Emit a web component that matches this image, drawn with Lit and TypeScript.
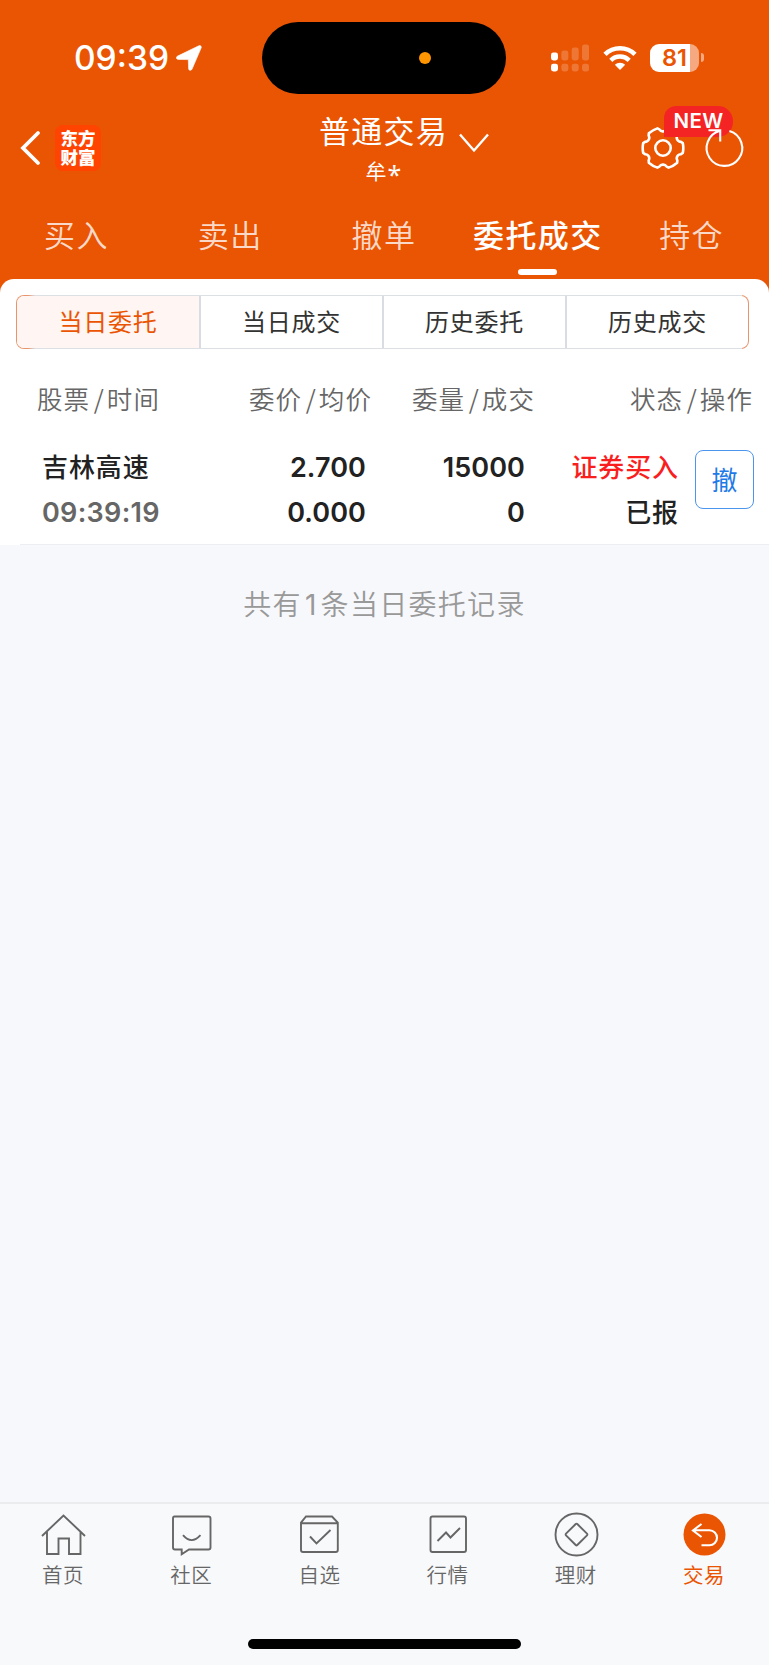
import { LitElement, html, svg, css, type TemplateResult } from "lit";
import { customElement, property, state } from "lit/decorators.js";
import { classMap } from "lit/directives/class-map.js";

const CJK = css`"Noto Sans CJK SC", sans-serif`;

@customElement("status-bar")
class StatusBar extends LitElement {
  static styles = css`
    :host { display: grid; grid-template-columns: 262px 244px 1fr; height: 94px; padding-top: 22px; box-sizing: border-box; color: #fff; font-family: Inter, ${CJK}; }
    .left { display: flex; align-items: center; height: 72px; padding-left: 74px; gap: 8px; }
    .time { font-size: 33.5px; font-weight: 500; line-height: 40px; width: 94px; white-space: nowrap; }
    .island { background: #000; border-radius: 36px; height: 72px; display: flex; align-items: center; justify-content: flex-end; padding-right: 75px; box-sizing: border-box; }
    .dot { width: 12px; height: 12px; border-radius: 50%; background: #ff9500; }
    .right { display: flex; align-items: center; height: 72px; padding-left: 45px; box-sizing: border-box; }
    .wifi { margin-left: 14px; }
    .battery { display: flex; align-items: center; margin: -1px 0 0 13px; }
    .cell { width: 49px; height: 28px; border-radius: 9px; background: linear-gradient(90deg, #fff 40px, #f6a980 40px); color: #ea5504; font-size: 23.5px; font-weight: 600; line-height: 28px; text-align: center; box-sizing: border-box; }
    .nub { width: 3px; height: 9px; margin-left: 2px; border-radius: 0 4px 4px 0; background: #f6a980; }
    svg { display: block; }
  `;
  render() {
    const bars = [52, 50, 47, 44];
    return html`
      <div class="left">
        <span class="time">09:39</span>
        <svg width="26" height="26" viewBox="0 0 26 26"><path d="M1.6 11.1 22.8.8c1.6-.7 3 .5 2.3 2.3L16 24.2c-.8 1.8-3.3 1.4-3.4-.5l-.3-9.1-9.9-.2C-.1 14.3-.3 12 1.6 11.1Z" fill="#fff" stroke="#fff" stroke-width="0.6" /></svg>
      </div>
      <div class="island"><span class="dot"></span></div>
      <div class="right">
        <svg width="38" height="28" viewBox="0 43.5 38 28">
          ${bars.map((y, i) => svg`
            <rect x=${i * 10.35} y=${y} width="7" height=${60 - y} rx="2.4" fill="#fff" opacity=${i ? 0.2 : 1} />
            <rect x=${i * 10.35} y="63.3" width="7" height="7.6" rx="2.4" fill="#fff" opacity=${i ? 0.2 : 1} />`)}
        </svg>
        <svg class="wifi" width="34" height="26" viewBox="0 0 34 26">
          <path d="M2 9.4a21.5 21.5 0 0 1 30 0" fill="none" stroke="#fff" stroke-width="4.6" />
          <path d="M7.8 15.3a13.2 13.2 0 0 1 18.4 0" fill="none" stroke="#fff" stroke-width="4.4" />
          <path d="M17 25 11.8 19.8a7.4 7.4 0 0 1 10.4 0Z" fill="#fff" />
        </svg>
        <div class="battery"><div class="cell">81</div><div class="nub"></div></div>
      </div>`;
  }
}

@customElement("trade-nav")
class TradeNav extends LitElement {
  static styles = css`
    :host { display: grid; grid-template-columns: 250px 1fr 250px; height: 108px; color: #fff; font-family: ${CJK}; }
    svg { display: block; }
    .back { display: flex; align-items: flex-start; padding: 31px 0 0 19px; }
    .back svg { margin-top: 5px; }
    .logo { width: 46px; height: 46px; margin-left: 14px; box-sizing: border-box; padding-top: 3px; border-radius: 8px; background: #ff4300; font-weight: 900; font-size: 17.5px; line-height: 19px; text-align: center; }
    .mid { display: flex; flex-direction: column; align-items: center; }
    .title { display: flex; margin: 15px 0 0 40px; font-size: 31px; line-height: 42px; letter-spacing: 1.2px; gap: 10px; white-space: nowrap; }
    .title svg { margin-top: 23px; }
    .user { display: flex; font-size: 21px; line-height: 30px; margin: 1px 2px 0 0; gap: 1px; }
    .star { font-size: 25px; line-height: 38px; font-family: "Noto Sans", sans-serif; }
    .tools { display: flex; padding: 12px 0 0 122px; }
    .gear { position: relative; width: 44px; height: 44px; margin-top: 20px; }
    .badge { position: absolute; left: 23px; top: -20px; width: 69px; height: 31px; border-radius: 12px 15px 15px 0; background: #f52424; font: 600 20.5px/30px Inter, sans-serif; letter-spacing: 0.4px; text-align: center; }
    .refresh { position: relative; margin: 21px 0 0 17px; }
  `;
  render() {
    const gear: string[] = [];
    for (let i = 0; i < 6; i++) {
      const p = (deg: number, r: number) => {
        const a = ((deg + i * 60) * Math.PI) / 180;
        return `${(22 + r * Math.cos(a)).toFixed(2)} ${(22 + r * Math.sin(a)).toFixed(2)}`;
      };
      gear.push(`${i ? "L" : "M"}${p(-14, 20.4)} Q${p(0, 20.8)} ${p(14, 20.4)} L${p(19, 19)} Q${p(22, 16.6)} ${p(30, 16.6)} Q${p(38, 16.6)} ${p(41, 19)}`);
    }
    return html`
      <div class="back">
        <svg width="22" height="36" viewBox="0 0 22 36"><path d="M19 3 4 18 19 33" fill="none" stroke="#fff" stroke-width="3.8" stroke-linecap="round" /></svg>
        <div class="logo">东方<br />财富</div>
      </div>
      <div class="mid">
        <div class="title">普通交易
          <svg width="32" height="22" viewBox="0 0 32 22"><path d="M2 2.5 16 18.5 30 2.5" fill="none" stroke="#fff" stroke-width="2.4" /></svg>
        </div>
        <div class="user"><span>牟</span><span class="star">*</span></div>
      </div>
      <div class="tools">
        <div class="gear">
          <svg width="44" height="44" viewBox="0 0 44 44" fill="none" stroke="#fff" stroke-width="2.6" stroke-linejoin="round">
            <path d="${gear.join(" ")}Z" /><circle cx="22" cy="22" r="7.7" />
          </svg>
          <div class="badge">NEW</div>
        </div>
        <svg class="refresh" width="44" height="42" viewBox="0 0 44 42" fill="none" stroke="#fff" stroke-width="2.1">
          <path d="M27.4 4A17.8 17.8 0 1 1 18.2 3.8M6.5 3.3H18.2V14.5" />
        </svg>
      </div>`;
  }
}

@customElement("order-tabs")
class OrderTabs extends LitElement {
  @property({ type: Array }) items: string[] = [];
  @property({ type: Number }) active = 0;
  static styles = css`
    :host { display: grid; grid-template-columns: repeat(5, 1fr); height: 77px; font-family: ${CJK}; }
    .tab { display: flex; flex-direction: column; align-items: center; font-size: 31px; line-height: 44px; padding: 10px 1px 0 0; color: rgba(255, 255, 255, 0.8); letter-spacing: 1.4px; font-weight: 350; white-space: nowrap; }
    .on { color: #fff; font-weight: 500; }
    .on::after { content: ""; width: 39px; height: 6px; border-radius: 3px; background: #fff; margin-top: 13px; }
  `;
  render() {
    return this.items.map((t, i) => html`<div class=${classMap({ tab: true, on: i === this.active })}>${t}</div>`);
  }
}

@customElement("segment-control")
class SegmentControl extends LitElement {
  @property({ type: Array }) items: string[] = [];
  static styles = css`
    :host { display: block; padding: 16px 20px 0 16px; font-family: ${CJK}; }
    .box { border-radius: 8px; padding: 1px; background: linear-gradient(90deg, #e8956c 12px, #dcdfe4 19px, #dcdfe4 calc(100% - 7px), #e8956c calc(100% - 7px)); }
    .row { display: grid; grid-template-columns: 184px 183px 183px 1fr; height: 52px; border-radius: 7px; overflow: hidden; background: #fff; }
    .seg { text-align: center; font-size: 24px; line-height: 50px; letter-spacing: 0.8px; color: #333; border-right: 2px solid #d9dce2; }
    .seg:last-child { border-right: 0; }
    .seg:first-child { color: #ea5504; background: #fff5f2; }
  `;
  render() {
    return html`<div class="box"><div class="row">${this.items.map((t) => html`<div class="seg">${t}</div>`)}</div></div>`;
  }
}

@customElement("order-list")
class OrderList extends LitElement {
  static styles = css`
    :host { display: block; font-family: Inter, ${CJK}; }
    .head, .row { display: grid; }
    .head { font-family: ${CJK}; padding: 29px 16px 0 37px; color: #666; font-size: 25.5px; line-height: 40px; letter-spacing: 1.1px; font-weight: 350; grid-template-columns: 174px 161px 163px 1fr; }
    .r { text-align: right; }
    .head span, .c span { white-space: nowrap; }
    .sl { margin: 0 2px 0 3.5px; }
    .row { padding: 28px 15px 0 42px; color: #222; grid-template-columns: 164px 160px 159px 154px 1fr; font-size: 27px; font-weight: 600; }
    .c { display: flex; flex-direction: column; height: 98px; line-height: 44.5px; }
    .c.r > span:not(.zh) { letter-spacing: 0.1px; }
    .zh { font-family: ${CJK}; font-size: 26px; font-weight: 500; letter-spacing: 0.9px; margin-top: -2px; margin-bottom: 2px; }
    .dim { color: #666; letter-spacing: 0.3px; }
    .red { color: #f91f1f; }
    .btn { justify-self: end; width: 59px; height: 59px; box-sizing: border-box; margin-top: 4px; border: 1.5px solid #4b95ef; border-radius: 8px; color: #1f7ae8; font: 400 26px/55px ${CJK}; text-align: center; background: #fff; }
    .line { height: 1px; margin-left: 20px; background: #eceef1; }
  `;
  render() {
    const h = (a: string, b: string) => html`${a}<span class="sl">/</span>${b}`;
    return html`
      <div class="head">
        <span>${h("股票", "时间")}</span><span class="r">${h("委价", "均价")}</span><span class="r">${h("委量", "成交")}</span><span class="r">${h("状态", "操作")}</span>
      </div>
      <div class="row">
        <div class="c"><span class="zh">吉林高速</span><span class="dim">09:39:19</span></div>
        <div class="c r"><span>2.700</span><span>0.000</span></div>
        <div class="c r"><span>15000</span><span>0</span></div>
        <div class="c r"><span class="zh red">证券买入</span><span class="zh">已报</span></div>
        <div class="btn">撤</div>
      </div>
      <div class="line"></div>`;
  }
}

const ICONS: Record<string, TemplateResult> = {
  home: svg`<path d="M1 22 22.5 1.5 44 22M6 18V40H17.5V24.5H28V40H39.5V18" />`,
  chat: svg`<path d="M5.5 2.5H39.5Q41.5 2.5 41.5 4.5V33.5Q41.5 35.5 39.5 35.5H20L12.7 40.3V35.5H6Q4 35.5 4 33.5V4.5Q4 2.5 5.5 2.5ZM14 21.2Q22.5 31 31.5 21.2" />`,
  box: svg`<path d="M9 2.5H35L40.8 8.7V36Q40.8 38 38.8 38H6Q4 38 4 36V8.7ZM4 9.2H41M13 22.5 19.5 29.5 33.5 16" />`,
  chart: svg`<rect x="4.5" y="2.5" width="35.5" height="35.5" rx="2" /><path d="M11.5 27 20 18.5 24.5 23.5 34 14" />`,
  money: svg`<circle cx="22.5" cy="20.5" r="21" /><path d="M21.7 10Q22.5 9.2 23.3 10L33 19.7Q33.8 20.5 33 21.3L23.3 31Q22.5 31.8 21.7 31L12 21.3Q11.2 20.5 12 19.7Z" />`,
  trade: svg`<circle cx="22.5" cy="20.5" r="21" fill="#ea5504" stroke="none" /><path stroke="#fff" stroke-width="2.1" d="M19.5 10 11 16.5 19.5 23M11 16.3H27.5A7.4 7.4 0 0 1 27.5 31.3H19.5" />`,
};

@customElement("bottom-bar")
class BottomBar extends LitElement {
  @property({ type: Array }) items: [string, string][] = [];
  static styles = css`
    :host { display: block; height: 163px; box-sizing: border-box; border-top: 2px solid #ebecee; background: #f8f9fb; font-family: ${CJK}; }
    .tabs { display: grid; grid-template-columns: repeat(6, 1fr); padding-top: 9px; height: 126px; box-sizing: border-box; }
    .tab { display: flex; flex-direction: column; align-items: center; color: #666; font-size: 20.5px; line-height: 30px; letter-spacing: 0.5px; font-weight: 350; padding-right: 1px; }
    .on { color: #ea5504; font-weight: 400; }
    svg { display: block; overflow: visible; }
    .label { margin: 2px 1px 0 0; }
    .pill { width: 273px; height: 10px; border-radius: 5px; background: #000; margin: 9px auto 0; }
  `;
  render() {
    return html`
      <div class="tabs">
        ${this.items.map(([k, t], i) => html`
          <div class=${classMap({ tab: true, on: i === 5 })}>
            <svg width="45" height="44" viewBox="0 -1 45 44" fill="none" stroke="#666" stroke-width="1.9">${ICONS[k]}</svg>
            <span class="label">${t}</span>
          </div>`)}
      </div>
      <div class="pill"></div>`;
  }
}

@customElement("app-root")
class AppRoot extends LitElement {
  @state() private count = 1;
  static styles = css`
    :host { display: flex; flex-direction: column; width: 769px; height: 1665px; background: #f7f8fb; font-family: ${CJK}; overflow: hidden; }
    .top { background: #ea5504; padding-bottom: 15px; }
    .card { background: #fff; border-radius: 14px 14px 0 0; margin-top: -15px; height: 266px; }
    .note { flex: 1; padding-top: 36px; text-align: center; color: #999; font-size: 28px; line-height: 44px; letter-spacing: 1.3px; font-weight: 350; }
    .n { font-family: Inter, sans-serif; font-weight: 400; margin: 0 3px; }
  `;
  render() {
    return html`
      <div class="top">
        <status-bar></status-bar>
        <trade-nav></trade-nav>
        <order-tabs .items=${["买入", "卖出", "撤单", "委托成交", "持仓"]} .active=${3}></order-tabs>
      </div>
      <div class="card">
        <segment-control .items=${["当日委托", "当日成交", "历史委托", "历史成交"]}></segment-control>
        <order-list></order-list>
      </div>
      <div class="note">共有<span class="n">${this.count}</span>条当日委托记录</div>
      <bottom-bar .items=${[["home", "首页"], ["chat", "社区"], ["box", "自选"], ["chart", "行情"], ["money", "理财"], ["trade", "交易"]]}></bottom-bar>`;
  }
}
